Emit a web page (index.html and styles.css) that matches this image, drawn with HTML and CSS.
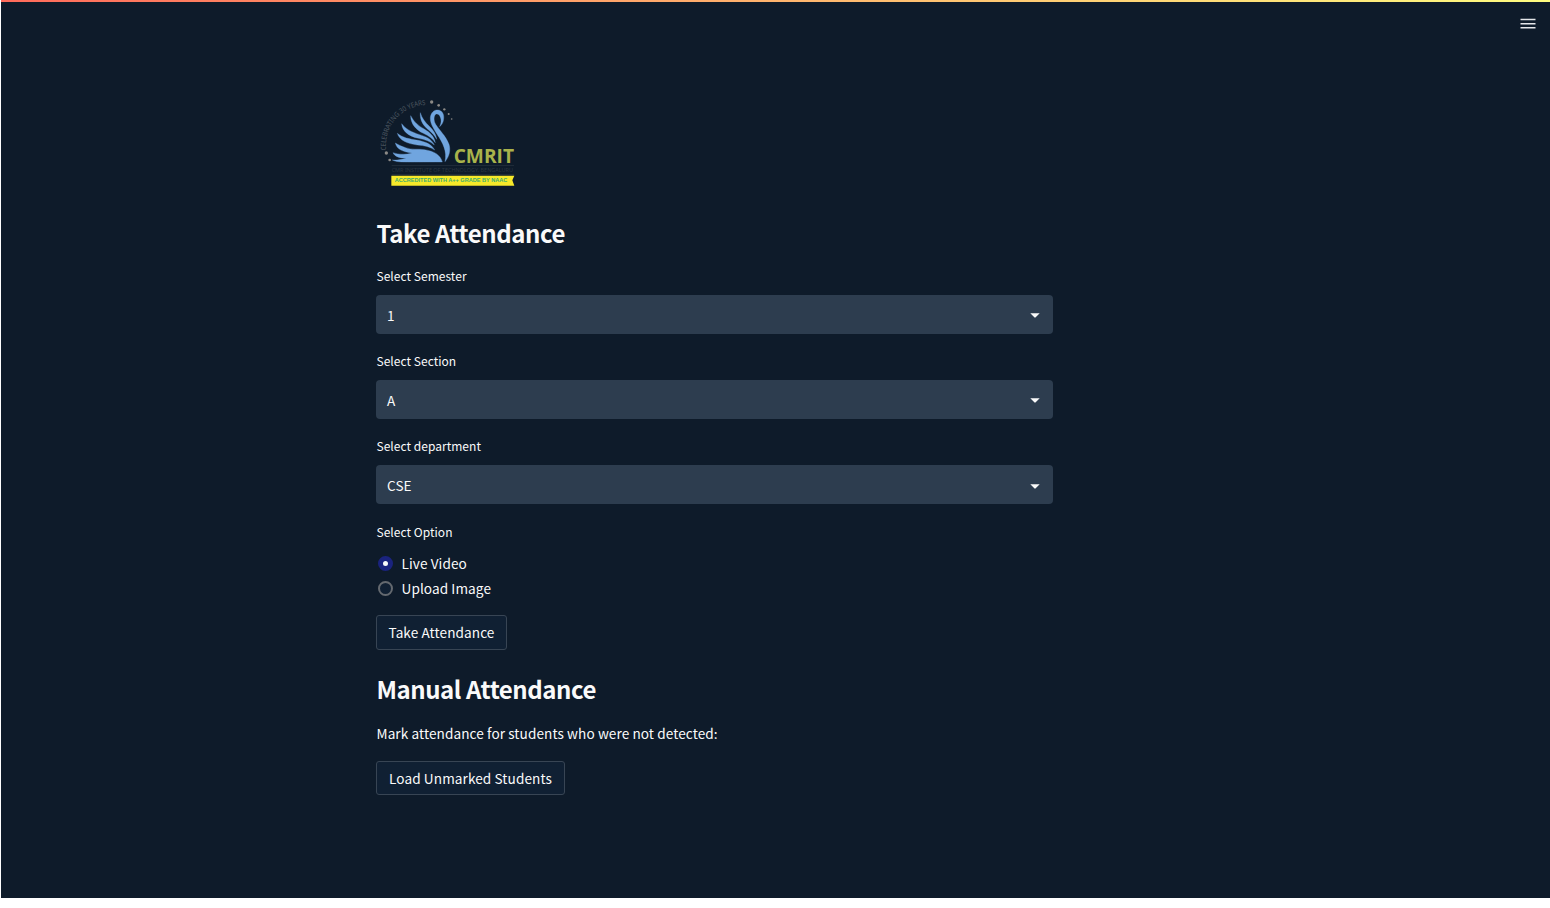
FILE: index.html
```html
<!DOCTYPE html>
<html lang="en">
<head>
<meta charset="utf-8">
<title>Take Attendance</title>
<link rel="stylesheet" href="styles.css">
</head>
<body>
<div class="app">
  <div class="decoration"></div>
  <header class="header">
    <svg class="menu" width="16" height="12" viewBox="0 0 16 12"><path d="M.5 1.600h15M.5 5.700h15M.5 9.800h15" stroke="#e4e6e9" stroke-width="1.5"/></svg>
  </header>
  <main class="content">
    <svg class="logo" width="160" height="105" viewBox="0 0 480 315">
      <defs><path id="arc" d="M48 181C42 110 90 44 182 44"/></defs>
      <text class="logo-arc"><textPath href="#arc" textLength="203" lengthAdjust="spacingAndGlyphs">CELEBRATING 30 YEARS</textPath></text>
      <g fill="#8b8986"><circle cx="185" cy="36" r="5"/><circle cx="206" cy="46" r="4"/><circle cx="223" cy="58" r="3.5"/><circle cx="236" cy="72" r="3"/><circle cx="245" cy="87" r="2.5"/><circle cx="49" cy="189" r="5"/><circle cx="59" cy="210" r="4"/></g>
      <g fill="#70a5df" stroke="#70a5df" stroke-width="1">
        <path d="M67 210C82 218 99 216 217 216C211 194 193 184 164 179C144 176 124 180 107 173C95 169 84 164 76 159C80 177 96 185 126 189C105 195 85 193 69 188C75 202 92 204 108 204C93 209 80 211 67 210Z"/>
        <path d="M82 130C88 151 111 161 142 165C163 167 181 170 194 180C183 160 163 155 144 151C118 147 97 143 82 130Z"/>
        <path d="M95 101C97 123 114 138 145 145C166 149 181 154 193 165C184 145 165 139 149 134C124 126 106 116 95 101Z"/>
        <path d="M122 77C122 101 137 119 160 130C177 138 188 146 196 158C192 137 178 127 164 118C145 107 132 96 122 77Z"/>
        <path d="M151 68C149 92 161 108 176 120C188 130 195 138 200 148C198 130 188 119 178 109C165 96 156 85 151 68Z"/>
        <path d="M225 215C232 184 218 158 202 134C188 112 180 99 181 82C183 67 193 59 204 60C217 61 223 74 221 87C220 97 216 104 209 110C212 102 214 96 213 89C212 80 206 70 199 72C191 75 190 91 197 103C208 121 228 138 237 163C243 182 237 201 225 215Z"/>
      </g>
      <text class="logo-name" x="251" y="219" textLength="181" lengthAdjust="spacingAndGlyphs">CMRIT</text>
      <path d="M65 226.500H432M65 253.500H432" stroke="#29343f" stroke-width="2"/>
      <text class="logo-sub" x="65" y="245" textLength="364" lengthAdjust="spacingAndGlyphs">CMR INSTITUTE OF TECHNOLOGY, BENGALURU</text>
      <path d="M64 257H433L427 271L433 287H64Z" fill="#f7e92a"/>
      <text class="logo-tag" x="74" y="277" textLength="338" lengthAdjust="spacingAndGlyphs">ACCREDITED WITH A++ GRADE BY NAAC</text>
    </svg>

    <h2 class="title">Take Attendance</h2>

    <div class="field">
      <div class="label">Select Semester</div>
      <div class="select"><span>1</span><svg class="caret" width="10" height="5" viewBox="0 0 10 5"><path d="M.3.2H9.700L5.700 4.300Q5 5 4.300 4.300Z"/></svg></div>
    </div>
    <div class="field">
      <div class="label">Select Section</div>
      <div class="select"><span>A</span><svg class="caret" width="10" height="5" viewBox="0 0 10 5"><path d="M.3.2H9.700L5.700 4.300Q5 5 4.300 4.300Z"/></svg></div>
    </div>
    <div class="field">
      <div class="label">Select department</div>
      <div class="select"><span>CSE</span><svg class="caret" width="10" height="5" viewBox="0 0 10 5"><path d="M.3.2H9.700L5.700 4.300Q5 5 4.300 4.300Z"/></svg></div>
    </div>

    <div class="label">Select Option</div>
    <div class="radios">
      <div class="radio"><span class="dot dot-on"></span><span>Live Video</span></div>
      <div class="radio"><span class="dot"></span><span>Upload Image</span></div>
    </div>
    <button class="button button-take">Take Attendance</button>

    <h2 class="title title-manual">Manual Attendance</h2>
    <p class="text">Mark attendance for students who were not detected:</p>
    <button class="button button-load">Load Unmarked Students</button>
  </main>
</div>
</body>
</html>
```
FILE: styles.css
```css
* { box-sizing: border-box; }
body {
  margin: 0;
  background: #fff;
  color: #fafafa;
  font-family: "Noto Sans CJK SC", "Noto Sans", sans-serif;
  font-size: 13.6px;
  letter-spacing: 0.09px;
}
.app { height: 898px; margin-left: 1px; background: #0e1b2a; overflow: hidden; }
.decoration { height: 2px; background: linear-gradient(90deg, #ff6b5b, #fffd80); }
.header { display: flex; justify-content: flex-end; height: 88px; padding: 16px 14px 0 0; }
.content { display: flex; flex-direction: column; align-items: flex-start; width: 677px; margin-left: 375px; }
.logo { display: block; margin-left: -6px; flex: none; }
.logo text { font-family: "Noto Sans", sans-serif; letter-spacing: 0; }
.logo .logo-arc { font-size: 21px; fill: #4d5760; }
.logo .logo-name { font-family: "Open Sans", sans-serif; font-size: 59px; font-weight: 700; fill: #a9b34b; }
.logo .logo-sub { font-size: 15px; fill: #2b3641; }
.logo .logo-tag { font-family: "Liberation Sans", sans-serif; font-size: 16px; font-weight: 700; fill: #3dac70; }
.title { margin: 20px 0 15px; height: 36px; line-height: 36px; padding-left: 0.5px; font-size: 24px; font-weight: 700; letter-spacing: -0.43px; white-space: nowrap; }
.label { height: 20px; line-height: 20px; padding-left: 0.5px; font-size: 12px; letter-spacing: 0.03px; white-space: nowrap; }
.field { width: 100%; height: 85.2px; }
.select {
  display: flex; align-items: center; justify-content: space-between;
  height: 39px; margin-top: 9px; padding: 0 13px 0 11px;
  background: #2d3d4f; border-radius: 4px;
}
.select span { line-height: 20px; }
.caret { fill: #fafafa; margin-top: 2.4px; }
.radios { margin: 9.400px 0 0 2.3px; }
.radio { display: flex; align-items: center; gap: 8px; height: 25px; }
.dot { width: 15px; height: 15px; border: 2px solid #64696f; border-radius: 50%; background: #102033; }
.dot-on { border: 5px solid #1a237e; background: #fafafa; }
.radio span:last-child { padding-left: 0.2px; }
.button {
  padding: 0; color: #fafafa; background: #102033; border: 1px solid #384554;
  border-radius: 3px; font: inherit; line-height: 20px; letter-spacing: inherit; white-space: nowrap;
}
.button-take { width: 131px; height: 35px; margin-top: 14px; }
.title-manual { margin: 21px 0 14px; }
.text { margin: 0; height: 24px; line-height: 24px; padding-left: 0.5px; white-space: nowrap; }
.button-load { width: 189px; height: 34px; margin-top: 16px; }
```
